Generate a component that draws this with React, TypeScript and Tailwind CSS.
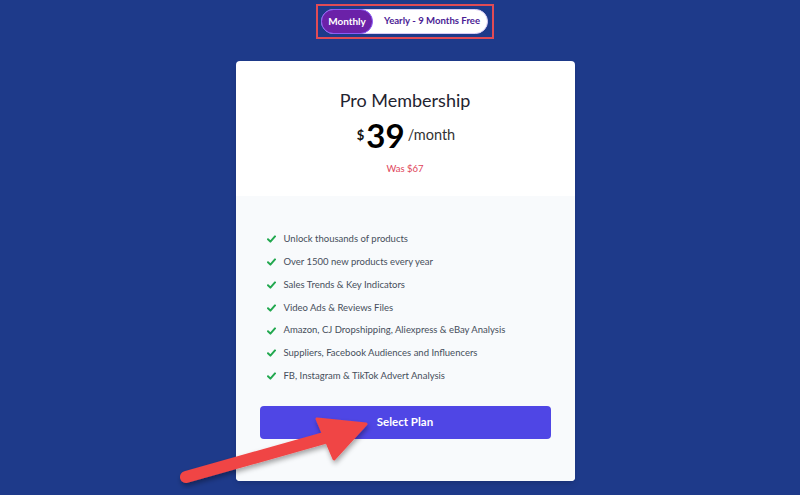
import React from "react";

const features = [
  "Unlock thousands of products",
  "Over 1500 new products every year",
  "Sales Trends & Key Indicators",
  "Video Ads & Reviews Files",
  "Amazon, CJ Dropshipping, Aliexpress & eBay Analysis",
  "Suppliers, Facebook Audiences and Influencers",
  "FB, Instagram & TikTok Advert Analysis",
];

function Check() {
  return (
    <svg width="9" height="8" viewBox="0 0 9 8" className="shrink-0">
      <path d="M1 4.3 L3.4 6.6 L8 1.4" fill="none" stroke="#22a84f" strokeWidth="2" strokeLinecap="round" strokeLinejoin="round" />
    </svg>
  );
}

export default function App() {
  return (
    <div className="relative w-[800px] h-[495px] overflow-hidden bg-[#1e3a8a] font-['Lato','Noto_Sans',sans-serif]">
      <div className="flex flex-col items-center pl-[10px] pt-1">
        <div className="border-2 border-[#e04b55] p-[3px] pr-[4px]">
          <div className="flex items-center h-[25px] w-[167px] rounded-full bg-white border border-[#d8ccf5]">
            <div className="flex items-center justify-center h-[25px] w-[52px] -ml-px rounded-full bg-[#6b21a8] border border-[#8b5cf6] text-white text-[10px] font-bold">
              Monthly
            </div>
            <div className="ml-[11px] text-[9.6px] font-bold text-[#4c1d95] whitespace-nowrap">
              Yearly - 9 Months Free
            </div>
          </div>
        </div>

        <div className="mt-[22px] w-[339px] rounded-[4px] overflow-hidden bg-white shadow-md">
          <div className="pt-[25px] pb-[20px] flex flex-col items-center">
            <div className="text-[18px] leading-[28px] text-[#1f2430]">Pro Membership</div>
            <div className="flex items-center h-[40px] mt-[1px] pl-[2px]">
              <span className="text-[13px] font-bold text-[#111] mr-[2px] mt-[1px]">$</span>
              <span className="text-[33px] leading-[40px] font-bold text-black">39</span>
              <span className="text-[14.5px] text-[#333] ml-[3px]">/month</span>
            </div>
            <div className="mt-[7px] text-[9.5px] leading-[14px] text-[#e0455a]">Was $67</div>
          </div>
          <div className="bg-[#f8fafc] pt-[32px] pb-[42px]">
            <div className="px-[31px] flex flex-col">
              {features.map((f) => (
                <div key={f} className="flex items-center gap-[8px] h-[22.8px]">
                  <Check />
                  <span className="text-[9.5px] text-[#464e5b] whitespace-nowrap">{f}</span>
                </div>
              ))}
            </div>
            <div className="px-6 mt-[18px]">
              <button className="w-full h-[33px] rounded-[4px] bg-[#4f46e5] text-white text-[11.5px] font-bold">
                Select Plan
              </button>
            </div>
          </div>
        </div>
      </div>

      <svg className="absolute inset-0 pointer-events-none" width="800" height="495" viewBox="0 0 800 495">
        <defs>
          <filter id="sh" x="-20%" y="-20%" width="140%" height="140%">
            <feDropShadow dx="1" dy="3" stdDeviation="2.5" floodColor="#000" floodOpacity="0.35" />
          </filter>
        </defs>
        <g filter="url(#sh)">
          <line x1="186" y1="477" x2="328" y2="437" stroke="#f04545" strokeWidth="12" strokeLinecap="round" />
          <path d="M317 419 L366 424 L334 459 Z" fill="#f04545" stroke="#f04545" strokeWidth="3" strokeLinejoin="round" />
        </g>
      </svg>
    </div>
  );
}
